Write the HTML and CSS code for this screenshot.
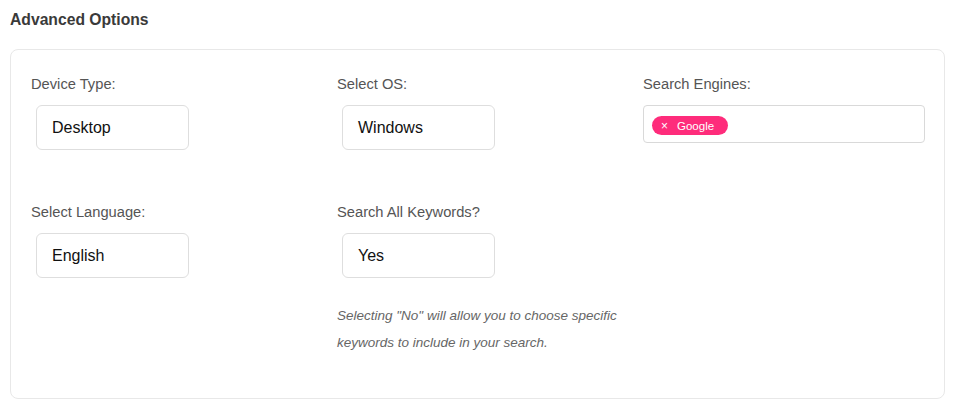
FILE: index.html
```html
<!DOCTYPE html>
<html lang="en">
<head>
<meta charset="utf-8">
<title>Advanced Options</title>
<link rel="stylesheet" href="styles.css">
</head>
<body>
<h2 class="title">Advanced Options</h2>
<div class="card">
  <div class="grid">
    <div class="field">
      <label class="label">Device Type:</label>
      <div class="select">Desktop</div>
    </div>
    <div class="field">
      <label class="label">Select OS:</label>
      <div class="select">Windows</div>
    </div>
    <div class="field">
      <label class="label">Search Engines:</label>
      <div class="multi">
        <span class="tag"><span class="tag-x">×</span>Google</span>
      </div>
    </div>
    <div class="field">
      <label class="label">Select Language:</label>
      <div class="select">English</div>
    </div>
    <div class="field">
      <label class="label">Search All Keywords?</label>
      <div class="select">Yes</div>
      <p class="help">Selecting "No" will allow you to choose specific keywords to include in your search.</p>
    </div>
  </div>
</div>
</body>
</html>
```
FILE: styles.css
```css
html, body {
  margin: 0;
  padding: 0;
  background: #ffffff;
}
body {
  padding: 10px 12px 0 10px;
  font-family: "Liberation Sans", Arial, sans-serif;
  color: #333;
}
.title {
  margin: 0 0 19px 0;
  font-size: 15.7px;
  line-height: 20px;
  font-weight: bold;
  color: #3a3a3a;
}
.card {
  border: 1px solid #e8e8e8;
  border-radius: 8px;
  padding: 24px 20px 42px 20px;
}
.grid {
  display: grid;
  grid-template-columns: 282px 282px 282px;
  column-gap: 24px;
  row-gap: 52px;
}
.field {
  display: flex;
  flex-direction: column;
  align-items: flex-start;
}
.label {
  font-size: 14.7px;
  line-height: 20px;
  color: #555;
  margin-bottom: 11px;
}
.select {
  box-sizing: border-box;
  margin-left: 5px;
  width: 153px;
  height: 45px;
  border: 1px solid #dedede;
  border-radius: 6px;
  padding: 0 15px;
  display: flex;
  align-items: center;
  font-size: 16px;
  color: #111;
}
.multi {
  box-sizing: border-box;
  width: 282px;
  height: 38px;
  border: 1px solid #d9d9d9;
  border-radius: 4px;
  padding: 10px 8px 0 8px;
  display: flex;
  align-items: flex-start;
}
.tag {
  display: inline-flex;
  align-items: center;
  height: 19px;
  padding: 0 14px 0 9px;
  border-radius: 10px;
  background: #fe2c7b;
  color: #fff;
  font-size: 11.5px;
}
.tag-x {
  font-size: 12px;
  margin-right: 9px;
}
.help {
  margin: 24px 0 0 0;
  font-size: 13.5px;
  line-height: 27px;
  font-style: italic;
  color: #666;
}
```
